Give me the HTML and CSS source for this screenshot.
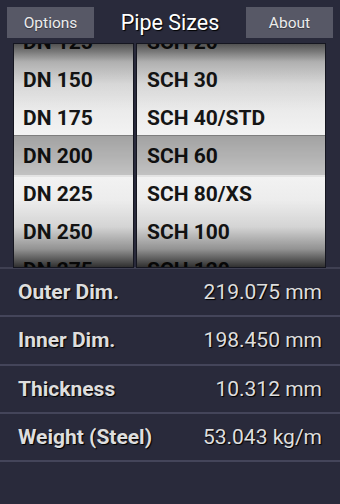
FILE: index.html
```html
<!DOCTYPE html>
<html>
<head>
<meta charset="utf-8">
<link rel="stylesheet" href="styles.css">
</head>
<body>
<div class="app">
  <header class="header">
    <button class="btn">Options</button>
    <div class="title">Pipe Sizes</div>
    <button class="btn">About</button>
  </header>
  <div class="picker">
    <div class="wheel wheel-left">
      <div class="items">
        <div class="item">DN 125</div>
        <div class="item">DN 150</div>
        <div class="item">DN 175</div>
        <div class="item">DN 200</div>
        <div class="item">DN 225</div>
        <div class="item">DN 250</div>
        <div class="item">DN 275</div>
      </div>
      <div class="band"></div>
      <div class="shade"></div>
    </div>
    <div class="wheel wheel-right">
      <div class="items">
        <div class="item">SCH 20</div>
        <div class="item">SCH 30</div>
        <div class="item">SCH 40/STD</div>
        <div class="item">SCH 60</div>
        <div class="item">SCH 80/XS</div>
        <div class="item">SCH 100</div>
        <div class="item">SCH 120</div>
      </div>
      <div class="band"></div>
      <div class="shade"></div>
    </div>
  </div>
  <div class="rows">
    <div class="row"><span class="label">Outer Dim.</span><span class="value">219.075 mm</span></div>
    <div class="row"><span class="label">Inner Dim.</span><span class="value">198.450 mm</span></div>
    <div class="row"><span class="label">Thickness</span><span class="value">10.312 mm</span></div>
    <div class="row"><span class="label">Weight (Steel)</span><span class="value">53.043 kg/m</span></div>
  </div>
</div>
</body>
</html>
```
FILE: styles.css
```css
* { box-sizing: border-box; }
html, body {
  margin: 0;
  padding: 0;
  background: #292a3b;
  font-family: Roboto, "Liberation Sans", sans-serif;
}
.app {
  width: 340px;
  height: 504px;
  overflow: hidden;
  background: #292a3b;
}
.header {
  display: flex;
  align-items: center;
  justify-content: space-between;
  padding: 7px 7px 0 7px;
  height: 38px;
}
.btn {
  width: 87px;
  height: 31px;
  border: none;
  background: #575866;
  color: #ececec;
  font-family: Roboto, "Liberation Sans", sans-serif;
  font-size: 15.5px;
  padding: 0;
  text-shadow: 0 1px 1px rgba(0,0,0,0.4);
}
.title {
  color: #ffffff;
  font-size: 21.5px;
  text-shadow: 1px 1px 1px #000;
}
.picker {
  margin-top: 6px;
  display: flex;
  gap: 4px;
  padding: 0 15px 0 14px;
  height: 225px;
  border-bottom: 2px solid #3f4052;
}
.wheel {
  position: relative;
  overflow: hidden;
  height: 223px;
  background: linear-gradient(to bottom, #d6d6d6 0%, #f2f2f2 40%, #f2f2f2 60%, #dcdcdc 100%);
  box-shadow: 0 0 0 1px #151620;
}
.wheel-left { width: 119px; }
.wheel-right { flex: 1; }
.items { margin-top: -21px; }
.item {
  height: 38px;
  line-height: 38px;
  font-size: 21px;
  font-weight: bold;
  color: #151515;
  white-space: nowrap;
}
.wheel-left .item { padding-left: 9px; }
.wheel-right .item { padding-left: 10px; }
.band {
  position: absolute;
  left: 0;
  right: 0;
  top: 91px;
  height: 42px;
  background: linear-gradient(to bottom, rgba(0,0,0,0.33), rgba(0,0,0,0.2));
  border-top: 1px solid rgba(0,0,0,0.35);
  border-bottom: 2px solid rgba(255,255,255,0.7);
}
.shade {
  position: absolute;
  inset: 0;
  background: linear-gradient(to bottom,
    rgba(0,0,0,0.62) 0%,
    rgba(0,0,0,0.2) 8%,
    rgba(0,0,0,0.05) 18%,
    rgba(0,0,0,0) 30%,
    rgba(0,0,0,0) 70%,
    rgba(0,0,0,0.08) 82%,
    rgba(0,0,0,0.35) 92%,
    rgba(0,0,0,0.78) 100%);
}
.row {
  display: flex;
  justify-content: space-between;
  align-items: center;
  height: 48.3px;
  padding: 0 18px;
  border-bottom: 2px solid #44455a;
  color: #dedede;
  font-size: 21px;
  text-shadow: 1px 1px 1px #000;
}
.label { font-weight: bold; }
.value { font-weight: normal; }
```
